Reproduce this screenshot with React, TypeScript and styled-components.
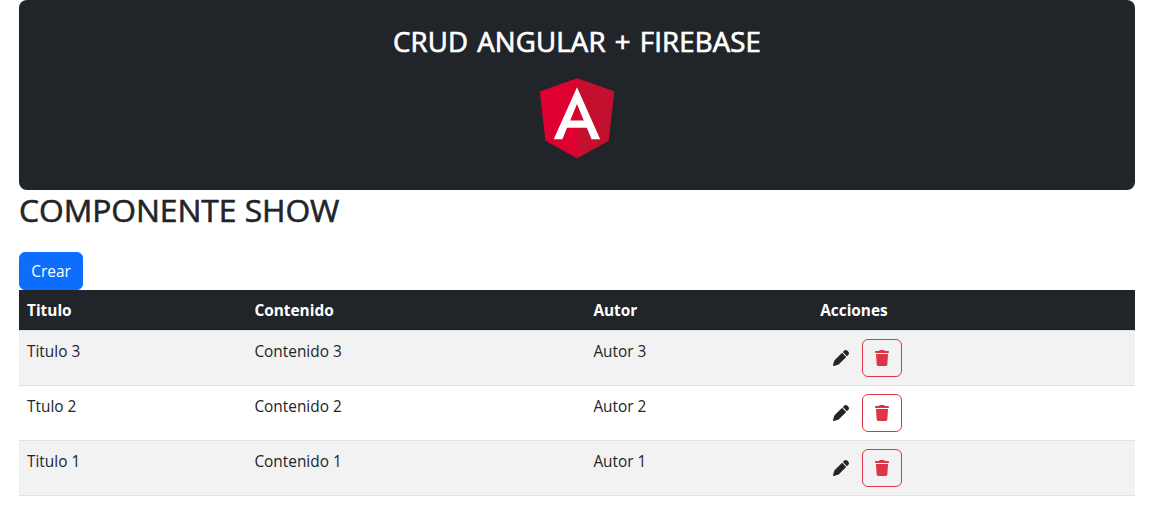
import React from 'react';
import styled, { createGlobalStyle } from 'styled-components';
import { FaPen, FaTrash } from 'react-icons/fa6';

const GlobalStyle = createGlobalStyle`
  *, *::before, *::after { box-sizing: border-box; }
  body {
    margin: 0;
    background: #fff;
    color: #212529;
    font-family: 'Segoe UI', 'Open Sans', 'Noto Sans', sans-serif;
    font-size: 15.4px;
    line-height: 24px;
  }
`;

const Page = styled.main`
  margin: 0 22px 0 19px;
`;

const Banner = styled.header`
  display: flex;
  flex-direction: column;
  align-items: center;
  height: 190px;
  padding-top: 24px;
  background: #212529;
  border-radius: 8px;
`;

const BannerTitle = styled.h3`
  margin: 0 0 8px;
  color: #fff;
  font-size: 27.6px;
  font-weight: 500;
  line-height: 34px;
  letter-spacing: 0.15px;
  word-spacing: 1.8px;
  -webkit-text-stroke: 0.7px currentColor;
  white-space: nowrap;
`;

const Logo = styled.svg`
  display: block;
  width: 100px;
  height: 100px;
`;

const PageTitle = styled.h2`
  margin: 0 0 23px;
  padding-top: 1px;
  font-size: 31.8px;
  font-weight: 500;
  line-height: 38px;
  letter-spacing: -0.05px;
  -webkit-text-stroke: 0.6px currentColor;
  white-space: nowrap;
`;

const Button = styled.button<{ $variant: 'primary' | 'plain' | 'danger' }>`
  display: inline-flex;
  align-items: center;
  justify-content: center;
  height: 38px;
  padding: 0 12px;
  font: inherit;
  border: 1px solid;
  border-radius: 6px;
  cursor: pointer;
  color: ${({ $variant }) => ({ primary: '#fff', plain: '#212529', danger: '#dc3545' })[$variant]};
  background: ${({ $variant }) => ($variant === 'primary' ? '#0d6efd' : 'transparent')};
  border-color: ${({ $variant }) =>
    ({ primary: '#0d6efd', plain: 'transparent', danger: '#dc3545' })[$variant]};
`;

const CreateButton = styled(Button)`
  display: flex;
  width: 64px;
  padding-top: 2px;
`;

const TrashIcon = styled(FaTrash)`
  width: 14px;
  height: 16px;
`;

const Table = styled.table`
  width: 100%;
  table-layout: fixed;
  border-collapse: separate;
  border-spacing: 0;
`;

const HeadCell = styled.th<{ $width?: number }>`
  width: ${({ $width }) => ($width ? `${$width}px` : 'auto')};
  height: 41px;
  padding: 9px 8px 7px;
  color: #fff;
  background: #212529;
  background-clip: padding-box;
  border-bottom: 1px solid #dee2e6;
  font-weight: 700;
  text-align: left;
`;

const Row = styled.tr`
  &:nth-child(odd) { background: #f2f2f2; }
`;

const Cell = styled.td`
  height: 55px;
  padding: 9px 8px 0;
  vertical-align: top;
  border-bottom: 1px solid #dee2e6;
`;

const ActionCell = styled(Cell)`
  padding-top: 8px;
`;

const Actions = styled.div`
  display: flex;
`;

const posts = [
  { title: 'Titulo 3', content: 'Contenido 3', author: 'Autor 3' },
  { title: 'Ttulo 2', content: 'Contenido 2', author: 'Autor 2' },
  { title: 'Titulo 1', content: 'Contenido 1', author: 'Autor 1' },
];

function AngularLogo() {
  return (
    <Logo viewBox="0 -0.8 250 250" role="img" aria-label="Angular">
      <path fill="#dd0031" d="M125 30 31.9 63.2l14.2 123.1L125 230l78.9-43.7 14.2-123.1z" />
      <path fill="#c3102e" d="M125 30v200l78.9-43.7 14.2-123.1z" />
      <path fill="#fff" d="M125 52.1 66.8 182.6h21.7l11.7-29.2h49.4l11.7 29.2H183zm17 83.3h-34l17-40.9z" />
    </Logo>
  );
}

export default function App() {
  return (
    <>
      <GlobalStyle />
      <Page>
        <Banner>
          <BannerTitle>CRUD ANGULAR + FIREBASE</BannerTitle>
          <AngularLogo />
        </Banner>
        <PageTitle>COMPONENTE SHOW</PageTitle>
        <CreateButton $variant="primary">Crear</CreateButton>
        <Table>
          <thead>
            <tr>
              <HeadCell $width={227.4}>Titulo</HeadCell>
              <HeadCell $width={339}>Contenido</HeadCell>
              <HeadCell $width={226.8}>Autor</HeadCell>
              <HeadCell>Acciones</HeadCell>
            </tr>
          </thead>
          <tbody>
            {posts.map((post) => (
              <Row key={post.title}>
                <Cell>{post.title}</Cell>
                <Cell>{post.content}</Cell>
                <Cell>{post.author}</Cell>
                <ActionCell>
                  <Actions>
                    <Button $variant="plain" aria-label="Editar"><FaPen size={16} /></Button>
                    <Button $variant="danger" aria-label="Eliminar"><TrashIcon /></Button>
                  </Actions>
                </ActionCell>
              </Row>
            ))}
          </tbody>
        </Table>
      </Page>
    </>
  );
}
